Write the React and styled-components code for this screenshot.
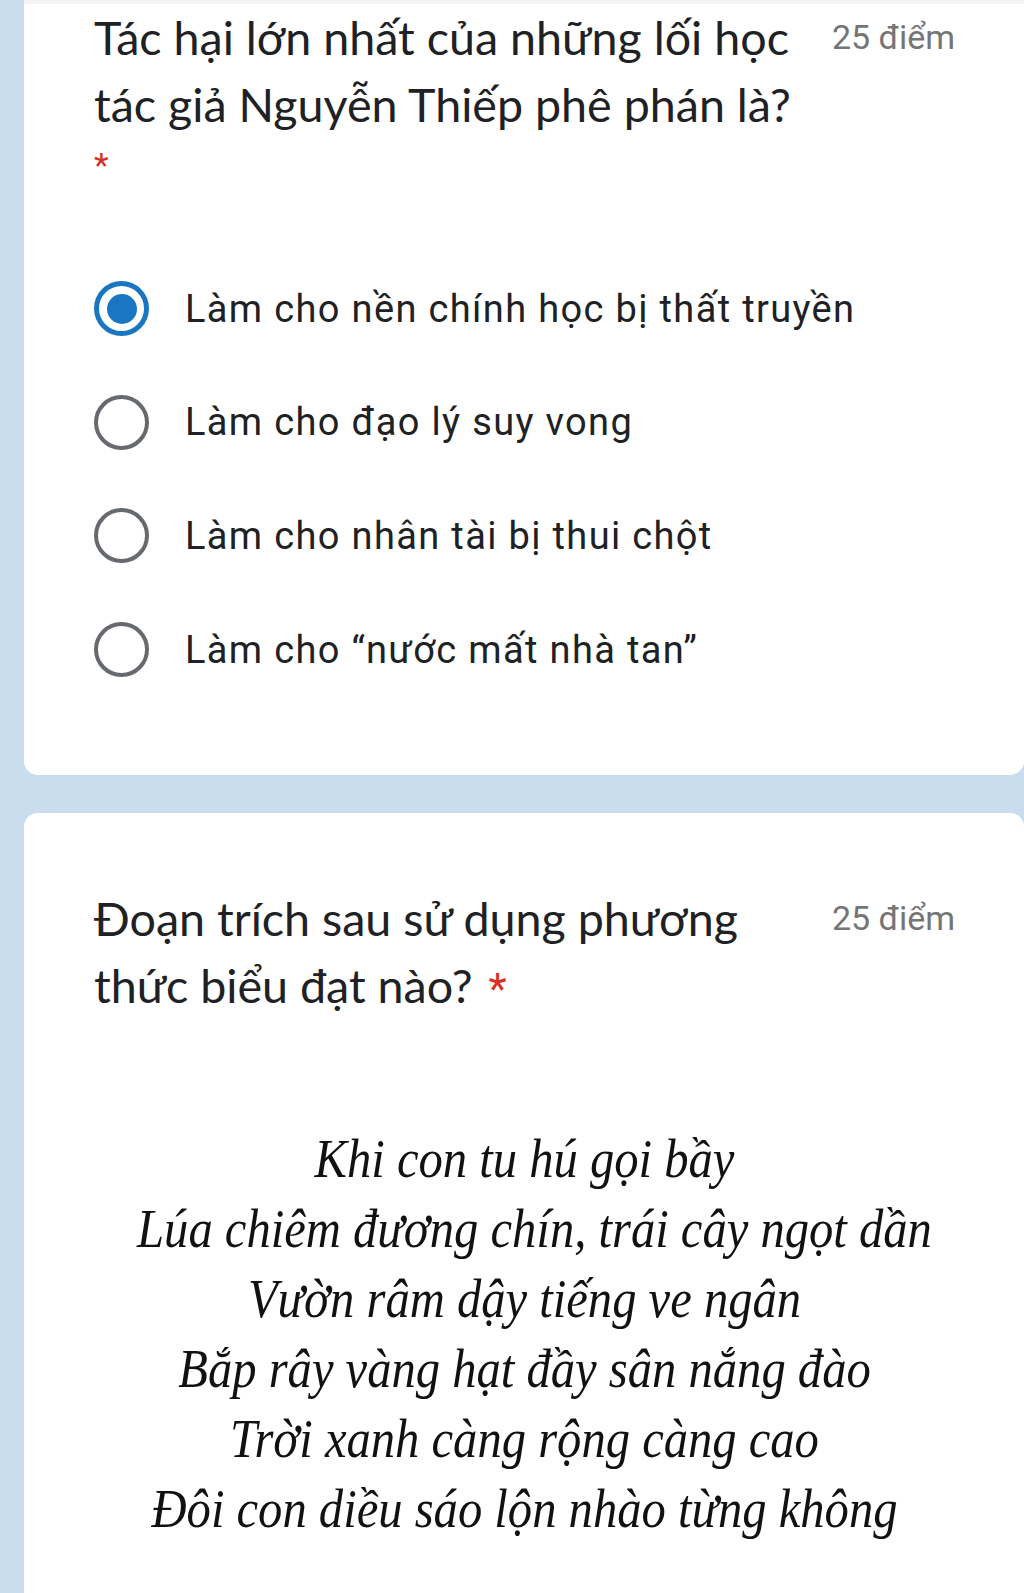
import React from 'react';
import styled, { createGlobalStyle } from 'styled-components';

const GlobalStyle = createGlobalStyle`
  html, body {
    margin: 0;
    padding: 0;
    background: #c9ddee;
  }
`

const Page = styled.div`
  display: flex;
  flex-direction: column;
  gap: 38px;
  padding-left: 24px;
  min-height: 1593px;
  box-sizing: border-box;
  font-family: Roboto, "Noto Sans", sans-serif;
  color: #202124;
`

const Card = styled.div`
  background: #ffffff;
  border-radius: ${p => (p.$first ? '0 0 14px 14px' : '14px 14px 0 0')};
  border-top: ${p => (p.$first ? '4px solid #f3f3f3' : 'none')};
  padding: ${p => (p.$first ? '0 69px 69px 70px' : '72px 69px 80px 70px')};
  flex: ${p => (p.$first ? 'none' : '1')};
`

const Header = styled.div`
  display: flex;
  align-items: flex-start;
  gap: 30px;
`

const Title = styled.div`
  flex: 1;
  font-family: Lato, "Open Sans", sans-serif;
  font-size: 46.6px;
  line-height: 67px;
  color: #202124;
`

const Points = styled.div`
  font-size: 34px;
  line-height: 67px;
  color: #757575;
  white-space: nowrap;
`

const Star = styled.span`
  color: #d93025;
  font-family: Roboto, sans-serif;
  font-size: ${p => (p.$big ? '42px' : '34px')};
  line-height: ${p => (p.$big ? '1' : 'inherit')};
  margin-left: ${p => (p.$big ? '4px' : '0')};
`

const StarLine = styled.div`
  height: 54px;
  line-height: 54px;
  margin-bottom: 60px;
`

const Options = styled.div`
  display: flex;
  flex-direction: column;
`

const Option = styled.label`
  display: flex;
  align-items: center;
  gap: 36px;
  height: 113.6px;
  font-size: 38px;
  letter-spacing: 1.35px;
  color: #202124;
`

const Radio = styled.span`
  width: 55px;
  height: 55px;
  box-sizing: border-box;
  border-radius: 50%;
  border: ${p => (p.$checked ? '5px solid #1a76c2' : '4px solid #666a6e')};
  display: flex;
  align-items: center;
  justify-content: center;
  flex-shrink: 0;
`

const Dot = styled.span`
  width: 30px;
  height: 30px;
  border-radius: 50%;
  background: #1a76c2;
`

const Poem = styled.div`
  margin-top: 105px;
  font-family: "Liberation Serif", "Times New Roman", serif;
  font-style: italic;
  font-size: 54px;
  line-height: 70px;
  text-align: center;
  white-space: nowrap;
  color: #111;
  transform: scaleX(0.9);
  transform-origin: center;
`

const options = [
  'Làm cho nền chính học bị thất truyền',
  'Làm cho đạo lý suy vong',
  'Làm cho nhân tài bị thui chột',
  'Làm cho “nước mất nhà tan”',
]

const poem = [
  'Khi con tu hú gọi bầy',
  'Lúa chiêm đương chín, trái cây ngọt dần',
  'Vườn râm dậy tiếng ve ngân',
  'Bắp rây vàng hạt đầy sân nắng đào',
  'Trời xanh càng rộng càng cao',
  'Đôi con diều sáo lộn nhào từng không',
]

const App = () => {
  return (
    <Page>
      <GlobalStyle />
      <Card $first>
        <Header>
          <Title>Tác hại lớn nhất của những lối học tác giả Nguyễn Thiếp phê phán là?</Title>
          <Points>25 điểm</Points>
        </Header>
        <StarLine><Star>*</Star></StarLine>
        <Options>
          {options.map((o, i) => (
            <Option key={o}>
              <Radio $checked={i === 0}>{i === 0 && <Dot />}</Radio>
              {o}
            </Option>
          ))}
        </Options>
      </Card>
      <Card>
        <Header>
          <Title>Đoạn trích sau sử dụng phương thức biểu đạt nào? <Star $big>*</Star></Title>
          <Points>25 điểm</Points>
        </Header>
        <Poem>
          {poem.map(l => <div key={l}>{l}</div>)}
        </Poem>
      </Card>
    </Page>
  );
};

export default App;
